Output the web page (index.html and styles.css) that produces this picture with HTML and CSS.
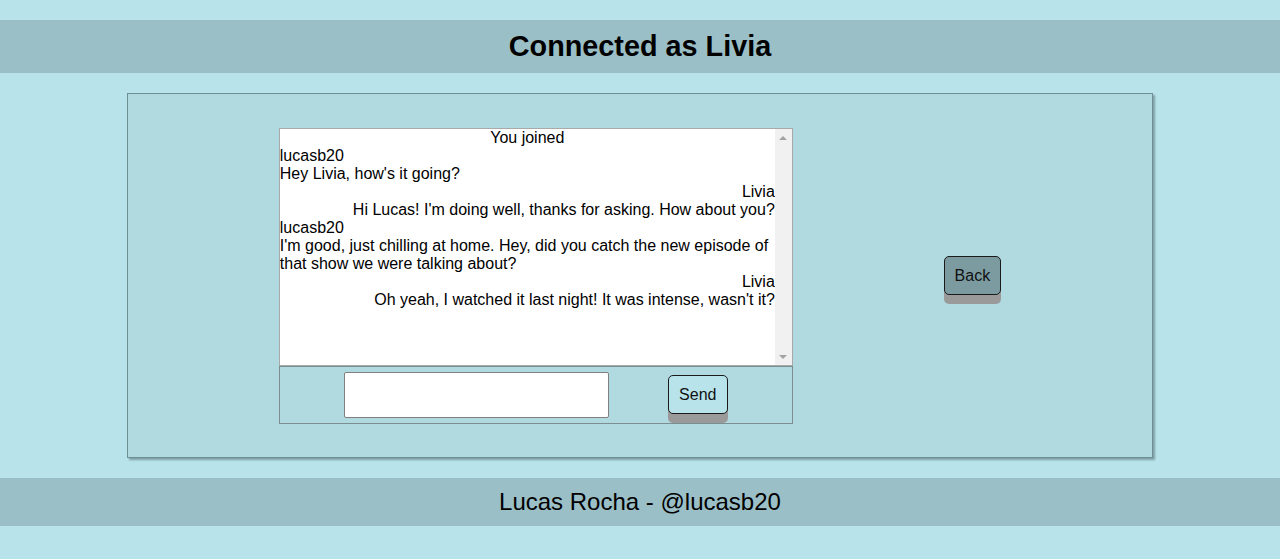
FILE: index.html
```html
<!DOCTYPE html>
<html lang="en">
<head>
<meta charset="utf-8">
<title>Chat</title>
<link rel="stylesheet" href="styles.css">
</head>
<body>
  <header class="topbar">
    <h1 class="title">Connected as Livia</h1>
  </header>
  <main class="panel">
    <section class="chat">
      <div class="messages">
        <div class="log">
          <div class="system">You joined</div>
          <div class="msg other">
            <div class="author">lucasb20</div>
            <div class="text">Hey Livia, how's it going?</div>
          </div>
          <div class="msg self">
            <div class="author">Livia</div>
            <div class="text">Hi Lucas! I'm doing well, thanks for asking. How about you?</div>
          </div>
          <div class="msg other">
            <div class="author">lucasb20</div>
            <div class="text">I'm good, just chilling at home. Hey, did you catch the new episode of that show we were talking about?</div>
          </div>
          <div class="msg self">
            <div class="author">Livia</div>
            <div class="text">Oh yeah, I watched it last night! It was intense, wasn't it?</div>
          </div>
        </div>
        <div class="scrollbar" aria-hidden="true">
          <span class="arrow arrow-up"></span>
          <span class="arrow arrow-down"></span>
        </div>
      </div>
      <form class="composer">
        <input class="field" type="text">
        <button class="btn btn-send" type="button">Send</button>
      </form>
    </section>
    <button class="btn btn-back" type="button">Back</button>
  </main>
  <footer class="footbar">Lucas Rocha - @lucasb20</footer>
</body>
</html>
```
FILE: styles.css
```css
html, body {
  margin: 0;
  padding: 0;
}
body {
  background: #b8e3ea;
  font-family: "Liberation Sans", Arial, sans-serif;
  color: #000;
}
.topbar {
  margin-top: 20px;
  background: #9bbfc7;
  padding: 10px 0;
  text-align: center;
}
.title {
  margin: 0;
  font-size: 28.8px;
  line-height: 33px;
  font-weight: bold;
}
.panel {
  width: 80%;
  margin: 20px auto;
  background: #b0d9e0;
  border: 1px solid #6f8f95;
  box-shadow: 2px 2px 2px #7f9fa5;
  display: flex;
  justify-content: space-evenly;
  align-items: center;
  padding: 34px 0 33px;
}
.chat {
  width: 514px;
  display: flex;
  flex-direction: column;
}
.messages {
  box-sizing: border-box;
  height: 238px;
  background: #fff;
  border: 1px solid #a9a9a9;
  display: flex;
  font-size: 16px;
  line-height: 18px;
}
.log {
  flex: 1;
  overflow: hidden;
}
.scrollbar {
  width: 17px;
  background: #f1f1f1;
  display: flex;
  flex-direction: column;
  justify-content: space-between;
  align-items: center;
  padding: 7px 0 6px;
}
.arrow {
  width: 0;
  height: 0;
  border-left: 4px solid transparent;
  border-right: 4px solid transparent;
}
.arrow-up {
  border-bottom: 4px solid #a3a3a3;
}
.arrow-down {
  border-top: 4px solid #a3a3a3;
}
.system {
  text-align: center;
}
.msg.self {
  text-align: right;
}
.composer {
  margin: 0;
  box-sizing: border-box;
  height: 58px;
  border: 1px solid #7b8f93;
  display: flex;
  align-items: center;
  padding-left: 64px;
  gap: 59px;
}
.field {
  box-sizing: border-box;
  width: 265px;
  height: 46px;
  margin: 0;
  border: 1px solid #808080;
  border-radius: 2px;
  background: #fff;
}
.btn {
  font-family: "Liberation Sans", Arial, sans-serif;
  font-size: 16px;
  line-height: 17px;
  padding: 10px 10px;
  border: 1px solid #1a1a1a;
  border-radius: 5px;
  color: #111;
  box-shadow: 0 9px 0 #9a9a9a;
}
.btn-send {
  background: #b8e3ea;
  width: 60px;
  margin-bottom: 1px;
}
.btn-back {
  background: #7b9ba1;
  margin-bottom: 2px;
}
.footbar {
  background: #9bbfc7;
  padding: 10px 0;
  text-align: center;
  font-size: 24px;
  line-height: 28px;
}
```
